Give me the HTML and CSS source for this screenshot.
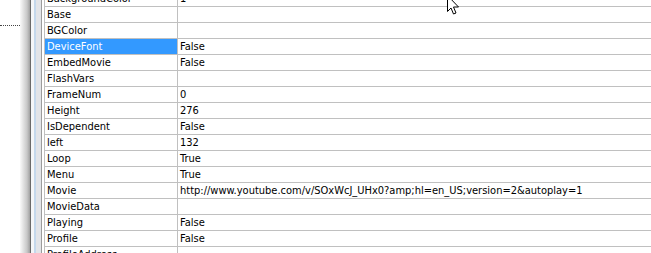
FILE: index.html
```html
<!DOCTYPE html>
<html>
<head>
<meta charset="utf-8">
<link rel="stylesheet" href="styles.css">
</head>
<body>
<div class="screen">
  <div class="desk"><div class="dots"></div></div>
  <div class="shadow"></div>
  <div class="frame">
    <div class="f-dark"></div>
    <div class="f-white"></div>
    <div class="f-blue"></div>
    <div class="f-grey"></div>
    <div class="f-line"></div>
    <div class="f-white2"></div>
  </div>
  <div class="grid">
    <div class="row"><div class="name">BackgroundColor</div><div class="val">1</div></div>
    <div class="row"><div class="name">Base</div><div class="val"></div></div>
    <div class="row"><div class="name">BGColor</div><div class="val"></div></div>
    <div class="row sel"><div class="name">DeviceFont</div><div class="val">False</div></div>
    <div class="row"><div class="name">EmbedMovie</div><div class="val">False</div></div>
    <div class="row"><div class="name">FlashVars</div><div class="val"></div></div>
    <div class="row"><div class="name">FrameNum</div><div class="val">0</div></div>
    <div class="row"><div class="name">Height</div><div class="val">276</div></div>
    <div class="row"><div class="name">IsDependent</div><div class="val">False</div></div>
    <div class="row"><div class="name">left</div><div class="val">132</div></div>
    <div class="row"><div class="name">Loop</div><div class="val">True</div></div>
    <div class="row"><div class="name">Menu</div><div class="val">True</div></div>
    <div class="row"><div class="name">Movie</div><div class="val">http://www.youtube.com/v/SOxWcJ_UHx0?amp;hl=en_US;version=2&amp;autoplay=1</div></div>
    <div class="row"><div class="name">MovieData</div><div class="val"></div></div>
    <div class="row"><div class="name">Playing</div><div class="val">False</div></div>
    <div class="row"><div class="name">Profile</div><div class="val">False</div></div>
    <div class="row"><div class="name">ProfileAddress</div><div class="val"></div></div>
  </div>
  <svg class="cursor" width="14" height="22" viewBox="0 0 14 22">
    <path d="M1.5 0.5 L1.5 16.5 L5 13 L7.5 19 L10 18 L7.5 12 L12.5 12 Z" fill="#fff" stroke="#000" stroke-width="1" stroke-linejoin="miter"/>
  </svg>
</div>
</body>
</html>
```
FILE: styles.css
```css
html, body {
  margin: 0;
  padding: 0;
  background: #fff;
}
.screen {
  position: relative;
  width: 651px;
  height: 253px;
  overflow: hidden;
  display: flex;
  font-family: "DejaVu Sans", Tahoma, sans-serif;
  font-stretch: condensed;
  font-size: 11px;
  color: #000;
}
.desk {
  width: 20px;
  flex: none;
  padding-top: 25px;
}
.dots {
  border-top: 1px dotted #444;
  width: 100%;
}
.shadow {
  width: 10px;
  flex: none;
  background: linear-gradient(to right, #fafafa, #c8c8c8 70%, #a0a0a0);
}
.frame {
  display: flex;
  flex: none;
}
.f-dark { width: 1px; background: #6a6a6a; }
.f-white { width: 3px; background: #f4f6f8; }
.f-blue { width: 2px; background: #c4d8ec; }
.f-grey { width: 5px; background: #e2e4e8; }
.f-line { width: 1px; background: #9c9c9c; }
.f-white2 { width: 2px; background: #fff; }
.grid {
  flex: 1;
  margin-top: -9px;
  border-left: 1px solid #c0c0c0;
  align-self: flex-start;
}
.row {
  display: flex;
  height: 15px;
  border-bottom: 1px solid #c0c0c0;
  line-height: 15px;
  white-space: nowrap;
}
.name {
  width: 130px;
  flex: none;
  padding-left: 2px;
  border-right: 1px solid #c0c0c0;
}
.val {
  flex: 1;
  padding-left: 2px;
}
.sel .name {
  background: #3399ff;
  color: #fff;
}
.cursor {
  position: absolute;
  left: 446px;
  top: -5px;
}
```
